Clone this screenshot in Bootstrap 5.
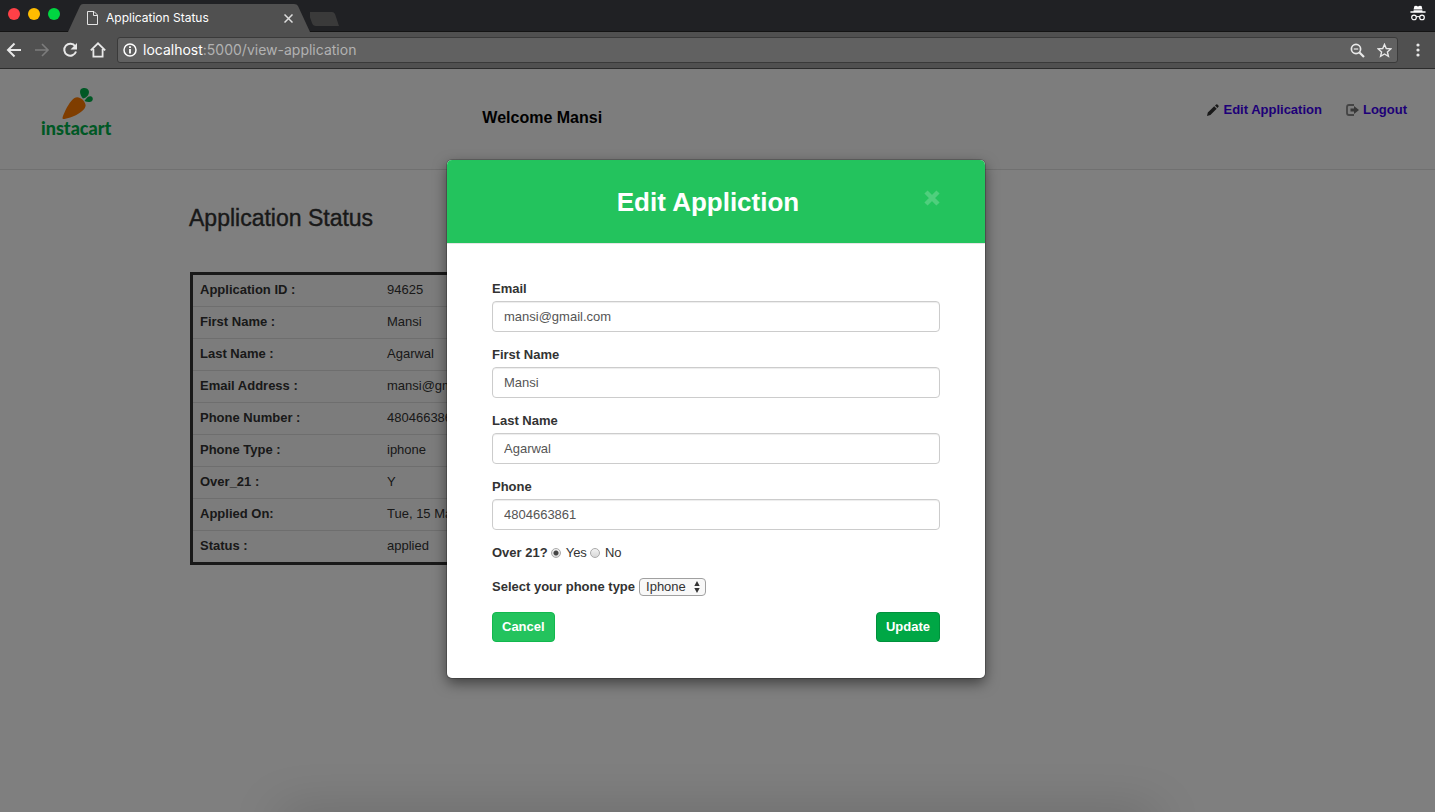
<!DOCTYPE html>
<html lang="en">
<head>
<meta charset="utf-8">
<meta name="viewport" content="width=device-width, initial-scale=1">
<title>Application Status</title>
<link href="https://cdn.jsdelivr.net/npm/bootstrap@5.3.0/dist/css/bootstrap.min.css" rel="stylesheet">
<style>
  body { font-family: "Liberation Sans", Arial, sans-serif; font-size: 13px; line-height: 18px; color: #333; }
  .browser-ui { font-family: Inter, sans-serif; font-size: 12px; }
  .browser-ui button { background: none; border: 0; padding: 0; display: flex; color: #e8e8e8; }
  .browser-ui svg { display: block; }

  /* tab strip */
  .tab-strip { background: #202124; height: 32px; border-bottom: 1px solid #141414; padding-right: 9px; }
  .light { width: 12px; height: 12px; border-radius: 50%; }
  .light-red { background: #ff4047; }
  .light-amber { background: #ffbd00; }
  .light-green { background: #00d641; }
  .page-tab { width: 242px; height: 32px; margin-left: 8px; padding: 4px 17px 0 19px; color: #fff; }
  .tab-shape { position: absolute; inset: 0; z-index: -1; }

  /* toolbar */
  .tool-bar { background: #505050; height: 37px; padding: 0 13px 0 6px; border-bottom: 1px solid #2c2c2c; }
  .address { background: #616161; border: 1px solid #3a3a3a; border-radius: 3px; height: 26px; margin-left: 11px; padding: 0 5px; }
  .url-text { font-size: 14px; color: #b2b2b2; padding-left: 6px; }
  .url-text b { font-weight: 400; color: #fff; }

  /* page */
  .site-header { height: 101px; background: #fafafa; border-bottom: 1px solid #e0e0e0; }
  .welcome { font-size: 16px; font-weight: 700; color: #000; line-height: 18px; margin: 0; }
  .site-header nav a { color: #3d00f0; font-weight: 700; text-decoration: none; line-height: 18px; height: 18px; }
  .status-area { padding: 34px 0 0 189px; }
  .status-area h1 { font-size: 23px; line-height: 28px; font-weight: 400; margin: 0 0 40px; -webkit-text-stroke: 0.4px #333; }
  .status-table { width: 528px; border: 3px solid #333; background: #f9f9f9; border-collapse: separate; border-spacing: 0; margin-left: 1px; }
  .status-table th, .status-table td { height: 32px; padding: 0 7px 1px; border-top: 1px solid #ddd; }
  .status-table tr:first-child > * { height: 31px; border-top: 0; }
  .status-table th { width: 187px; }

  /* dialog */
  .veil { position: absolute; inset: 0; padding-right: 3px; background: rgba(0,0,0,.5); }
  .dock-shadow { position: absolute; left: 20%; right: 20%; bottom: -20px; height: 12px; box-shadow: 0 0 50px 8px rgba(0,0,0,.2); }
  .edit-dialog { width: 538px; max-width: 100%; margin: 91px auto 0; }
  .edit-dialog .modal-content { background: #fff; border: 0; border-radius: 5px; overflow: hidden; color: #333; }
  .dialog-frame { border-radius: 5px; box-shadow: 0 5px 14px rgba(0,0,0,.5), 0 0 0 1px rgba(0,0,0,.2); }
  .edit-dialog .modal-header { background: #23c35d; border-bottom: 1px solid #e5e5e5; padding: 26px 45px 25px; border-radius: 0; }
  .edit-dialog h2 { font-size: 26px; line-height: 32px; font-weight: 700; color: #fff; margin: 0; }
  .dismiss { background: none; border: 0; padding: 4px 0 0; color: #fff; opacity: .2; display: flex; }
  .edit-dialog .modal-body { padding: 36px 45px; }
  .field { margin-bottom: 14px; }
  .field label, .lead-in { display: block; font-weight: 700; }
  .field label { margin-bottom: 3px; }
  .field .form-control { height: 31px; font-size: 13px; line-height: 18px; padding: 5px 11px; border: 1px solid #ccc; border-radius: 4px; color: #555; background: #fff; box-shadow: inset 0 1px 1px rgba(0,0,0,.075); }
  .choice { gap: 3px; }
  .dot { appearance: none; width: 10px; height: 10px; margin: 0 2px 0 0; border: 1px solid #aaa; border-radius: 50%; background: linear-gradient(#f2f2f2, #d8d8d8); }
  .dot:checked { background: radial-gradient(circle, #444 2px, transparent 3px), linear-gradient(#f2f2f2, #d8d8d8); }
  .picker { appearance: none; width: 67px; height: 18px; border: 1px solid #a0a0a0; border-radius: 4px; padding: 0 6px; font-size: 13px; line-height: 16px; color: #333;
    background: #f8f8f8 url("data:image/svg+xml,%3Csvg xmlns='http://www.w3.org/2000/svg' width='6' height='12'%3E%3Cpath d='M3 0 5.7 5H.3zM3 12 .3 7h5.4z' fill='%23333'/%3E%3C/svg%3E") no-repeat right 5px center; }
  .act { font-size: 13px; line-height: 18px; font-weight: 700; padding: 5px 9px; border-radius: 4px; color: #fff; }
  .act-cancel { background: #23c35d; border-color: #12b84e; }
  .act-update { background: #00a745; border-color: #00913c; }
</style>
</head>
<body>
<div class="vh-100 d-flex flex-column overflow-hidden">

  <div class="browser-ui flex-shrink-0">
    <div class="tab-strip d-flex align-items-start">
      <div class="d-flex gap-2 ps-2 pt-2">
        <span class="light light-red"></span>
        <span class="light light-amber"></span>
        <span class="light light-green"></span>
      </div>
      <div class="page-tab position-relative z-1 d-flex align-items-center">
        <svg class="tab-shape" width="242" height="32" viewBox="0 0 242 32"><path d="M0 32 12 6Q13 4 15 4H226Q229 4 230 6L242 32Z" fill="#505050"/></svg>
        <svg width="11" height="14" viewBox="0 0 11 14" fill="none" stroke="#e4e4e4"><path d="M.5.5H7L10.500 4V13.500H.5ZM6.500.5V4.500H10.500"/></svg>
        <span class="ms-2 me-auto">Application Status</span>
        <button type="button" aria-label="Close tab"><svg width="9" height="9" viewBox="0 0 9 9" stroke="#ddd" stroke-width="1.500"><path d="M.5.5 8.500 8.500M8.500.5.5 8.500"/></svg></button>
      </div>
      <svg class="mt-2" width="36" height="22" viewBox="0 0 36 22"><path d="M-2 4H22Q24 4 25 6L29 18H6Q3 18 2 15Z" fill="#3a3a3a"/></svg>
      <svg class="ms-auto mt-1" width="16" height="18" viewBox="0 0 18 18" fill="#fff"><path d="M5 1 7 .8 9 1.600 11 .8 13 1 14 5H4ZM4 6H14V7H17.500V8.600H.5V7H4Z"/><g fill="none" stroke="#fff" stroke-width="1.300"><circle cx="4.500" cy="14" r="2.600"/><circle cx="13.500" cy="14" r="2.600"/><path d="M7 13.500Q9 12.300 11 13.500"/></g></svg>
    </div>
    <div class="tool-bar d-flex align-items-center">
      <div class="d-flex align-items-center">
        <button type="button" aria-label="Back"><svg width="16" height="16" viewBox="0 0 16 16" fill="none" stroke="currentColor" stroke-width="2"><path d="M15 8H2.500M8.500 1.500 2 8 8.500 14.500"/></svg></button>
        <button type="button" aria-label="Forward" class="ms-2 me-2 ps-1 pe-1"><svg width="16" height="16" viewBox="0 0 16 16" fill="none" stroke="#7c7c7c" stroke-width="1.600"><path d="M1 8H14M8 2 14 8 8 14"/></svg></button>
        <button type="button" aria-label="Reload"><svg width="16" height="16" viewBox="0 0 16 16"><path d="M13.200 4.300A6 6 0 1 0 14 9.500" fill="none" stroke="currentColor" stroke-width="2"/><path d="M15 1V7.500H8.500Z" fill="currentColor"/></svg></button>
        <button type="button" aria-label="Home" class="ms-2 ps-1"><svg width="16" height="16" viewBox="0 0 16 16" fill="none" stroke="currentColor" stroke-width="1.800"><path d="M.8 8.400 8 1.300 15.200 8.400M3.400 7V14.600H12.600V7"/></svg></button>
      </div>
      <div class="address d-flex align-items-center flex-grow-1">
        <svg width="14" height="14" viewBox="0 0 14 14"><circle cx="7" cy="7" r="6" fill="none" stroke="#fff" stroke-width="1.500"/><path d="M6.100 6H7.900V10.600H6.100ZM6.100 3.200H7.900V4.900H6.100Z" fill="#fff"/></svg>
        <span class="url-text flex-grow-1"><b>localhost</b>:5000/view-application</span>
        <button type="button" aria-label="Zoom" class="me-2 pe-1"><svg width="15" height="15" viewBox="0 0 15 15" fill="none" stroke="currentColor"><circle cx="6" cy="6" r="4.600" stroke-width="1.700"/><path d="M3.800 6H8.200" stroke-width="1.200"/><path d="M9.500 9.500 14 14" stroke-width="2.200"/></svg></button>
        <button type="button" aria-label="Bookmark"><svg width="15" height="15" viewBox="0 0 16 16" fill="none" stroke="currentColor" stroke-width="1.500"><path d="M8 1.500 9.900 5.900 14.700 6.300 11.100 9.500 12.200 14.200 8 11.700 3.800 14.200 4.900 9.500 1.300 6.300 6.100 5.900Z"/></svg></button>
      </div>
      <button type="button" aria-label="Menu" class="ms-3"><svg width="8" height="14" viewBox="0 0 8 14" fill="currentColor"><circle cx="4" cy="2" r="1.600"/><circle cx="4" cy="7" r="1.600"/><circle cx="4" cy="12" r="1.600"/></svg></button>
    </div>
  </div>

  <div class="position-relative flex-grow-1 overflow-hidden bg-white">
    <header class="site-header row g-0">
      <div class="col-4 ps-4"><a href="#" class="d-inline-block ms-3 mt-3" aria-label="instacart">
        <svg width="76" height="54" viewBox="0 0 76 54"><path d="M22.600 33.500C22 32 29 16 34.500 13C39 10.500 44.500 15 45.600 20C46 25.500 35 32 24.500 34Q22.800 34.300 22.600 33.500Z" fill="#ff7a00"/><path d="M43 13.500C39.500 9.500 38.500 3.500 43.500 3C49 2.500 50.500 7.500 47.500 11Q45.500 13 43 13.500ZM44.500 16C46.500 12 50.500 9.500 52.500 12.500C54 16.500 49.500 18.500 44.500 16Z" fill="#00b14b"/><text x="1" y="50" font-family="Lato, sans-serif" font-weight="900" font-size="18" fill="#00b14b">instacart</text></svg></a></div>
      <div class="col-4 pt-4"><p class="welcome mt-3 ms-1">Welcome Mansi</p></div>
      <nav class="col-4 d-flex justify-content-end pt-4 pe-4">
        <a href="#" class="mt-2 me-4 d-flex align-items-center"><svg class="me-1" width="12" height="12" viewBox="0 0 12 12" fill="#333"><path d="M0 12 .8 8.500 7.200 2.200 9.700 4.700 3.400 11.100ZM8 1.500 9.200.4Q10 0 10.800.8L11.400 1.400Q12 2.200 11.500 2.800L10.400 4Z"/></svg>Edit Application</a>
        <a href="#" class="mt-2 me-1 d-flex align-items-center"><svg class="me-1" width="13" height="12" viewBox="0 0 13 12"><path d="M8 1H3Q1 1 1 3V9Q1 11 3 11H8" fill="none" stroke="#888" stroke-width="1.800"/><path d="M4.500 4.500H8V2L13 6 8 10V7.500H4.500Z" fill="#707070"/></svg>Logout</a>
      </nav>
    </header>

    <main class="status-area">
      <h1>Application Status</h1>
      <table class="status-table">
        <tbody>
        <tr><th scope="row">Application ID :</th><td>94625</td></tr>
        <tr><th scope="row">First Name :</th><td>Mansi</td></tr>
        <tr><th scope="row">Last Name :</th><td>Agarwal</td></tr>
        <tr><th scope="row">Email Address :</th><td>mansi@gmail.com</td></tr>
        <tr><th scope="row">Phone Number :</th><td>4804663861</td></tr>
        <tr><th scope="row">Phone Type :</th><td>iphone</td></tr>
        <tr><th scope="row">Over_21 :</th><td>Y</td></tr>
        <tr><th scope="row">Applied On:</th><td>Tue, 15 Ma</td></tr>
        <tr><th scope="row">Status :</th><td>applied</td></tr>
        </tbody>
      </table>
    </main>

    <div class="veil">
      <div class="edit-dialog" role="dialog" aria-labelledby="dialog-title">
        <div class="dialog-frame"><div class="modal-content">
          <div class="modal-header d-flex align-items-start">
            <h2 id="dialog-title" class="flex-grow-1 text-center">Edit Appliction</h2>
            <button type="button" class="dismiss" aria-label="Close"><svg width="16" height="16" viewBox="0 0 16 16" stroke="currentColor" stroke-width="4.500"><path d="M2 2 14 14M14 2 2 14"/></svg></button>
          </div>
          <form class="modal-body">
            <div class="field"><label for="email">Email</label><input class="form-control" id="email" type="email" value="mansi@gmail.com"></div>
            <div class="field"><label for="first">First Name</label><input class="form-control" id="first" type="text" value="Mansi"></div>
            <div class="field"><label for="last">Last Name</label><input class="form-control" id="last" type="text" value="Agarwal"></div>
            <div class="field"><label for="phone">Phone</label><input class="form-control" id="phone" type="tel" value="4804663861"></div>
            <div class="choice d-flex align-items-center mb-3">
              <span class="lead-in">Over 21?</span>
              <input class="dot" type="radio" name="over" id="yes" checked><label for="yes">Yes</label>
              <input class="dot" type="radio" name="over" id="no"><label for="no">No</label>
            </div>
            <div class="d-flex align-items-center gap-1 mb-3">
              <label class="lead-in" for="kind">Select your phone type</label>
              <select class="picker" id="kind"><option>Iphone</option><option>Android</option></select>
            </div>
            <div class="d-flex justify-content-between">
              <button type="button" class="btn act act-cancel">Cancel</button>
              <button type="submit" class="btn act act-update">Update</button>
            </div>
          </form>
        </div></div>
      </div>
      <div class="dock-shadow"></div>
    </div>
  </div>
</div>
<script src="https://cdn.jsdelivr.net/npm/bootstrap@5.3.0/dist/js/bootstrap.bundle.min.js"></script>
</body>
</html>
